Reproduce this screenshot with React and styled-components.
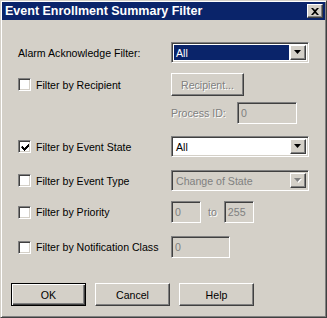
import React from 'react';
import styled, { createGlobalStyle, css } from 'styled-components';

const Global = createGlobalStyle`
  html, body { margin: 0; padding: 0; background: #D4D0C8; }
  body { font-family: "Liberation Sans", Arial, sans-serif; font-size: 10.6px; color: #000; }
`;

const FACE = '#D4D0C8';

const raised = css`
  border: 1px solid;
  border-color: #fff #404040 #404040 #fff;
  box-shadow: inset -1px -1px #808080, inset 1px 1px ${FACE};
  background: ${FACE};
`;

const sunken = css`
  border: 1px solid;
  border-color: #808080 #fff #fff #808080;
  box-shadow: inset 1px 1px #404040, inset -1px -1px ${FACE};
`;

const Window = styled.div`
  box-sizing: border-box;
  width: 327px;
  height: 318px;
  padding: 1px;
  border: 1px solid;
  border-color: ${FACE} #404040 #404040 ${FACE};
  box-shadow: inset 1px 1px #fff, inset -1px -1px #808080;
  background: ${FACE};
  display: flex;
  flex-direction: column;
`;

const TitleBar = styled.div`
  height: 18px;
  background: #0A246A;
  color: #fff;
  font-weight: bold;
  font-size: 12.5px;
  display: flex;
  align-items: center;
  justify-content: space-between;
  padding: 0 2px 0 3px;
`;

const CloseBtn = styled.div`
  ${raised};
  box-sizing: border-box;
  width: 16px;
  height: 14px;
  display: flex;
  align-items: center;
  justify-content: center;
`;

const Body = styled.div`
  padding: 0 14px 0 16px;
  display: flex;
  flex-direction: column;
`;

const Row = styled.div`
  display: grid;
  grid-template-columns: 153px auto;
  align-items: center;
  height: ${p => p.$h}px;
  margin-top: ${p => p.$top}px;
`;

const Cell = styled.div`
  display: flex;
  align-items: center;
  gap: ${p => p.$gap || 0}px;
`;

const Label = styled.span`
  color: ${p => (p.$off ? '#808080' : '#000')};
  text-shadow: ${p => (p.$off ? '1px 1px #fff' : 'none')};
  white-space: nowrap;
  ${p => p.$w && css`width: ${p.$w}px;`}
`;

const Box = styled.span`
  ${sunken};
  box-sizing: border-box;
  display: inline-block;
  width: 13px;
  height: 13px;
  background: #fff;
  margin-right: 5px;
  position: relative;
`;

const Check = ({ on }) => (
  <Box>
    {on && (
      <svg width="11" height="11" viewBox="0 0 11 11" style={{ position: 'absolute', left: 1, top: 1 }}>
        <path d="M2 4h1v1h1v1h1v-1h1v-1h1v-1h1v-1h1v3h-1v1h-1v1h-1v1h-1v1h-1v-1h-1v-1h-1v-1h-1z" fill="#000" />
      </svg>
    )}
  </Box>
);

const Combo = styled.div`
  ${sunken};
  box-sizing: border-box;
  width: ${p => p.$w}px;
  height: ${p => p.$h}px;
  background: ${p => (p.$off ? FACE : '#fff')};
  display: flex;
  align-items: stretch;
  padding: 2px;
  gap: 1px;
`;

const ComboText = styled.div`
  flex: 1;
  display: flex;
  align-items: center;
  padding-left: 2px;
  background: ${p => (p.$sel ? '#0A246A' : 'transparent')};
  color: ${p => (p.$sel ? '#fff' : p.$off ? '#808080' : '#000')};
`;

const DropBtn = styled.div`
  ${raised};
  box-sizing: border-box;
  width: 16px;
  display: flex;
  align-items: center;
  justify-content: center;
`;

const Arrow = ({ off }) => (
  <svg width="8" height="5" viewBox="0 0 8 5">
    {off && <path d="M1 1h7l-3.5 4z" fill="#fff" />}
    <path d="M0 0h7l-3.5 4z" fill={off ? '#808080' : '#000'} />
  </svg>
);

const Field = styled.div`
  ${sunken};
  box-sizing: border-box;
  width: ${p => p.$w}px;
  height: 22px;
  background: ${FACE};
  color: #808080;
  padding: 3px 3px;
  line-height: 14px;
`;

const PushButton = styled.div`
  ${raised};
  box-sizing: border-box;
  width: ${p => p.$w}px;
  height: ${p => p.$h}px;
  display: flex;
  align-items: center;
  justify-content: center;
  ${p => p.$default && css`
    border: 1px solid #000;
    box-shadow: inset 1px 1px #fff, inset -1px -1px #404040, inset -2px -2px #808080;
  `}
`;

const ButtonRow = styled.div`
  display: flex;
  gap: 9px;
  margin-top: 25px;
  margin-left: -7px;
`;

const Combobox = ({ value, w = 138, h = 21, sel, off }) => (
  <Combo $w={w} $h={h} $off={off}>
    <ComboText $sel={sel} $off={off}>{value}</ComboText>
    <DropBtn><Arrow off={off} /></DropBtn>
  </Combo>
);

export default function App() {
  return (
    <>
      <Global />
      <Window>
        <TitleBar>
          <span>Event Enrollment Summary Filter</span>
          <CloseBtn>
            <svg width="8" height="7" viewBox="0 0 8 7">
              <path d="M0 0h2l2 2 2-2h2l-3 3.5 3 3.5h-2l-2-2-2 2h-2l3-3.5z" fill="#000" />
            </svg>
          </CloseBtn>
        </TitleBar>
        <Body>
          <Row $top={22} $h={21}>
            <Cell><Label>Alarm Acknowledge Filter:</Label></Cell>
            <Combobox value="All" sel />
          </Row>
          <Row $top={10} $h={23}>
            <Cell><Check /><Label>Filter by Recipient</Label></Cell>
            <PushButton $w={73} $h={23}><Label $off>Recipient...</Label></PushButton>
          </Row>
          <Row $top={6} $h={22}>
            <Cell />
            <Cell><Label $off $w={66}>Process ID:</Label><Field $w={60}>0</Field></Cell>
          </Row>
          <Row $top={12} $h={21}>
            <Cell><Check on /><Label>Filter by Event State</Label></Cell>
            <Combobox value="All" />
          </Row>
          <Row $top={13} $h={21}>
            <Cell><Check /><Label>Filter by Event Type</Label></Cell>
            <Combobox value="Change of State" off />
          </Row>
          <Row $top={10} $h={22}>
            <Cell><Check /><Label>Filter by Priority</Label></Cell>
            <Cell $gap={7}><Field $w={30}>0</Field><Label $off>to</Label><Field $w={30}>255</Field></Cell>
          </Row>
          <Row $top={13} $h={22}>
            <Cell><Check /><Label>Filter by Notification Class</Label></Cell>
            <Field $w={59}>0</Field>
          </Row>
          <ButtonRow>
            <PushButton $w={75} $h={23} $default>OK</PushButton>
            <PushButton $w={75} $h={23}>Cancel</PushButton>
            <PushButton $w={75} $h={23}>Help</PushButton>
          </ButtonRow>
        </Body>
      </Window>
    </>
  );
}
